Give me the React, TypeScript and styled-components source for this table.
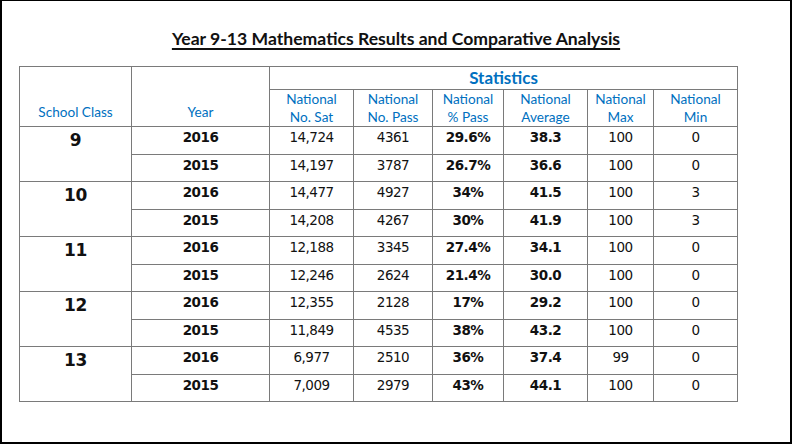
import React from "react";
import styled, { createGlobalStyle } from "styled-components";

const Global = createGlobalStyle`
  html, body { margin: 0; padding: 0; background: #fff; }
  body { font-family: "DejaVu Sans", sans-serif; }
`;

const Frame = styled.div`
  box-sizing: border-box;
  width: 792px;
  height: 444px;
  border: 2px solid #000;
  border-top-width: 1px;
  padding: 28px 0 0 17px;
`;

const Title = styled.h1`
  margin: 0 0 0 -17px;
  text-align: center;
  font-family: Lato, "Open Sans", sans-serif;
  font-weight: 700;
  font-size: 17.6px;
  line-height: 20px;
  color: #111;
  text-decoration: underline;
  text-underline-offset: 3px;
  text-decoration-thickness: 1.5px;
`;

const Table = styled.table`
  margin-top: 17px;
  border-collapse: collapse;
  table-layout: fixed;
  width: 719px;
`;

const HeadCell = styled.th<{ $align?: "bottom" | "middle"; $big?: boolean }>`
  border: 1px solid #7a7a7a;
  padding: 0 0 ${(p) => (p.$align === "bottom" ? "5px" : "0")};
  font-family: Lato, "Open Sans", sans-serif;
  font-weight: ${(p) => (p.$big ? 700 : 400)};
  font-size: ${(p) => (p.$big ? "17px" : "13.6px")};
  line-height: ${(p) => (p.$big ? "22px" : "18px")};
  color: #0070c0;
  vertical-align: ${(p) => p.$align ?? "middle"};
  text-align: center;
`;

const Row = styled.tr`
  height: 27.5px;
`;

const ClassCell = styled.td`
  border: 1px solid #7a7a7a;
  vertical-align: top;
  text-align: center;
  font-weight: 700;
  font-size: 17px;
  letter-spacing: -0.3px;
  line-height: 20px;
  padding: 3px 0 0;
  color: #111;
`;

const Cell = styled.td<{ $bold?: boolean }>`
  border: 1px solid #7a7a7a;
  vertical-align: top;
  text-align: center;
  font-weight: ${(p) => (p.$bold ? 700 : 400)};
  font-size: 13.5px;
  letter-spacing: -0.5px;
  line-height: 16px;
  padding: 2px 0 0;
  color: #111;
`;

type R = [string, string, string, string, string, string, string];
const groups: { cls: string; rows: R[] }[] = [
  { cls: "9", rows: [["2016", "14,724", "4361", "29.6%", "38.3", "100", "0"], ["2015", "14,197", "3787", "26.7%", "36.6", "100", "0"]] },
  { cls: "10", rows: [["2016", "14,477", "4927", "34%", "41.5", "100", "3"], ["2015", "14,208", "4267", "30%", "41.9", "100", "3"]] },
  { cls: "11", rows: [["2016", "12,188", "3345", "27.4%", "34.1", "100", "0"], ["2015", "12,246", "2624", "21.4%", "30.0", "100", "0"]] },
  { cls: "12", rows: [["2016", "12,355", "2128", "17%", "29.2", "100", "0"], ["2015", "11,849", "4535", "38%", "43.2", "100", "0"]] },
  { cls: "13", rows: [["2016", "6,977", "2510", "36%", "37.4", "99", "0"], ["2015", "7,009", "2979", "43%", "44.1", "100", "0"]] },
];

const widths = [112, 138, 84, 79, 71, 84, 66, 84];
const heads: [string, string][] = [
  ["National", "No. Sat"],
  ["National", "No. Pass"],
  ["National", "% Pass"],
  ["National", "Average"],
  ["National", "Max"],
  ["National", "Min"],
];

export default function App() {
  return (
    <>
      <Global />
      <Frame>
        <Title>Year 9-13 Mathematics Results and Comparative Analysis</Title>
        <Table>
          <colgroup>
            {widths.map((w, i) => (
              <col key={i} style={{ width: w }} />
            ))}
          </colgroup>
          <thead>
            <tr style={{ height: 23 }}>
              <HeadCell rowSpan={2} $align="bottom">School Class</HeadCell>
              <HeadCell rowSpan={2} $align="bottom">Year</HeadCell>
              <HeadCell colSpan={6} $big>Statistics</HeadCell>
            </tr>
            <tr style={{ height: 37 }}>
              {heads.map(([a, b], i) => (
                <HeadCell key={i}>
                  {a}
                  <br />
                  {b}
                </HeadCell>
              ))}
            </tr>
          </thead>
          <tbody>
            {groups.map((g) =>
              g.rows.map((r, i) => (
                <Row key={g.cls + i}>
                  {i === 0 && <ClassCell rowSpan={2}>{g.cls}</ClassCell>}
                  <Cell $bold>{r[0]}</Cell>
                  <Cell>{r[1]}</Cell>
                  <Cell>{r[2]}</Cell>
                  <Cell $bold>{r[3]}</Cell>
                  <Cell $bold>{r[4]}</Cell>
                  <Cell>{r[5]}</Cell>
                  <Cell>{r[6]}</Cell>
                </Row>
              ))
            )}
          </tbody>
        </Table>
      </Frame>
    </>
  );
}
